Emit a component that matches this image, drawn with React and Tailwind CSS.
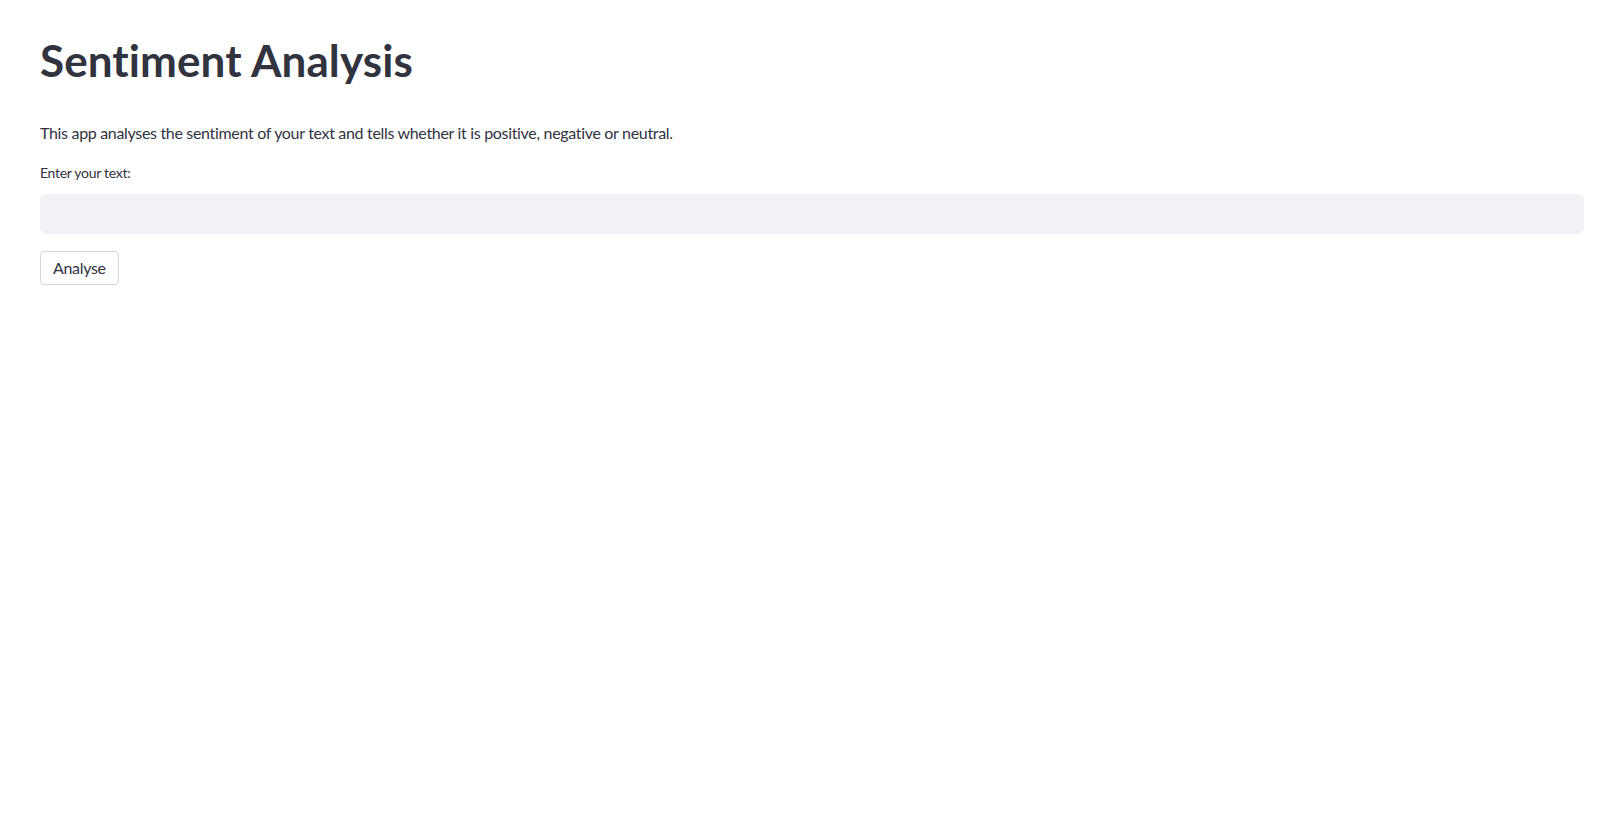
export default function App() {
  return (
    <div
      className="min-h-screen bg-white text-[#31333f]"
      style={{ fontFamily: 'Lato, "Noto Sans", sans-serif' }}
    >
      <main className="px-10 pt-[34px]">
        <h1 className="text-[44px] font-bold leading-[1.2] tracking-[0.002em]">
          Sentiment Analysis
        </h1>

        <p className="mt-[33px] text-[16px] leading-[1.6] tracking-[-0.02em]">
          This app analyses the sentiment of your text and tells whether it is
          positive, negative or neutral.
        </p>

        <label className="mt-[17px] block text-[14px] leading-[1.6] tracking-[-0.02em]">
          Enter your text:
        </label>
        <input
          type="text"
          className="mt-[9px] block h-10 w-[1544px] rounded-md bg-[#f0f2f6] px-3 text-[16px] outline-none"
        />

        <button className="mt-[17px] block h-[34px] rounded-[4px] border border-[#d6d6d9] bg-white px-3 text-[16px] tracking-[-0.02em]">
          Analyse
        </button>
      </main>
    </div>
  )
}
